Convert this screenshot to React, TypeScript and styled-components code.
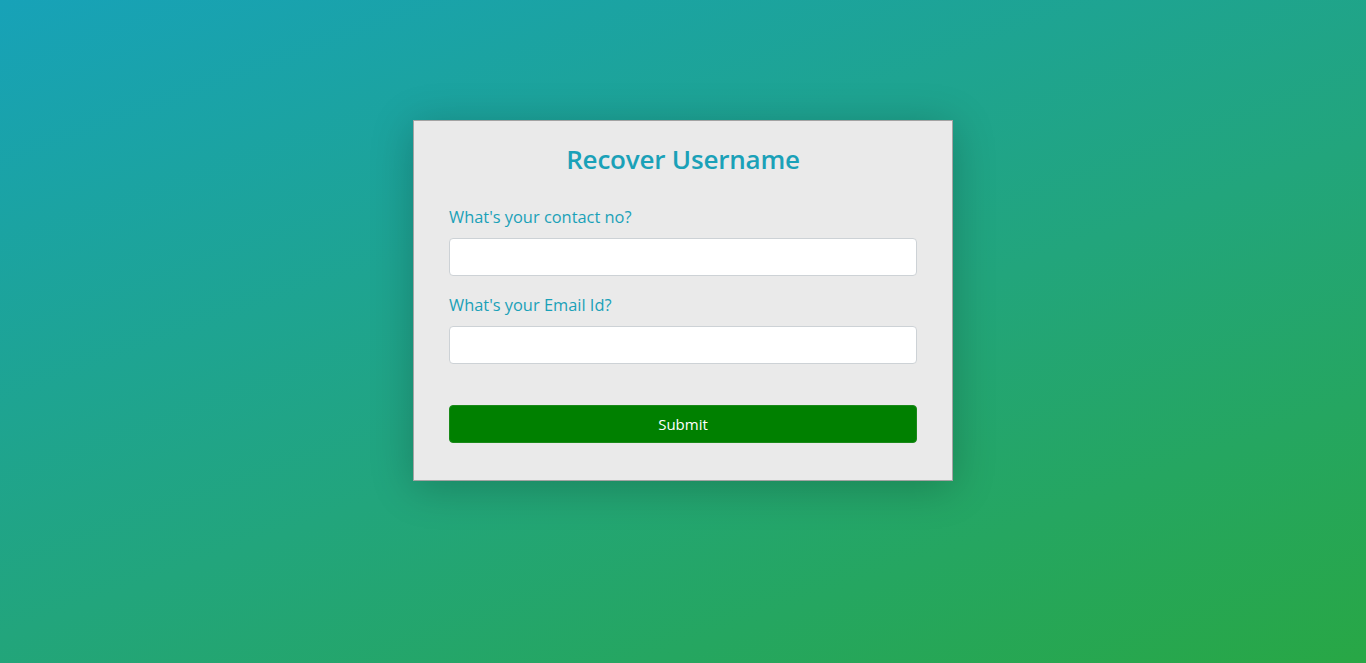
import { FC } from 'react';
import styled, { createGlobalStyle } from 'styled-components';

const GlobalStyle = createGlobalStyle`
  html, body {
    margin: 0;
    padding: 0;
    height: 100%;
  }
  body {
    font-family: "Open Sans", "Noto Sans", sans-serif;
  }
  #root {
    min-height: 100%;
  }
`;

const Page = styled.div`
  min-height: 663px;
  background: linear-gradient(160deg, #17a2b8 0%, #22a57c 55%, #28a745 100%);
  display: flex;
  justify-content: center;
  align-items: flex-start;
  padding-top: 120px;
  box-sizing: border-box;
`;

const Card = styled.form`
  width: 540px;
  box-sizing: border-box;
  background-color: #eaeaea;
  border: 1px solid #a3a3a3;
  padding: 22px 35px 37px;
  box-shadow: 0 6px 40px rgba(0, 0, 0, 0.22);
  display: flex;
  flex-direction: column;
`;

const Title = styled.h2`
  margin: 0 0 31px 0;
  text-align: center;
  color: #1aa1b8;
  font-size: 26px;
  font-weight: 600;
  line-height: 32px;
  letter-spacing: -0.2px;
`;

const Field = styled.div`
  display: flex;
  flex-direction: column;
  gap: 10px;
  margin-bottom: 18px;
`;

const Label = styled.label`
  color: #1aa1b8;
  font-size: 16.4px;
  line-height: 22px;
`;

const Input = styled.input`
  height: 38px;
  box-sizing: border-box;
  background-color: white;
  border: 1px solid #cdd2d6;
  border-radius: 4px;
  padding: 6px 12px;
  font-size: 15px;
  outline: none;
`;

const SubmitButton = styled.button`
  margin-top: 23px;
  height: 38px;
  background-color: #008000;
  border: 1px solid #1a8a1a;
  border-radius: 4px;
  color: white;
  font-family: inherit;
  font-size: 15px;
  cursor: pointer;
`;

const App: FC = () => {
  return (
    <>
      <GlobalStyle />
      <Page>
        <Card onSubmit={ e => e.preventDefault() }>
          <Title>Recover Username</Title>
          <Field>
            <Label htmlFor='contact'>What's your contact no?</Label>
            <Input id='contact' type='text' />
          </Field>
          <Field>
            <Label htmlFor='email'>What's your Email Id?</Label>
            <Input id='email' type='email' />
          </Field>
          <SubmitButton type='submit'>Submit</SubmitButton>
        </Card>
      </Page>
    </>
  );
};

export default App;
